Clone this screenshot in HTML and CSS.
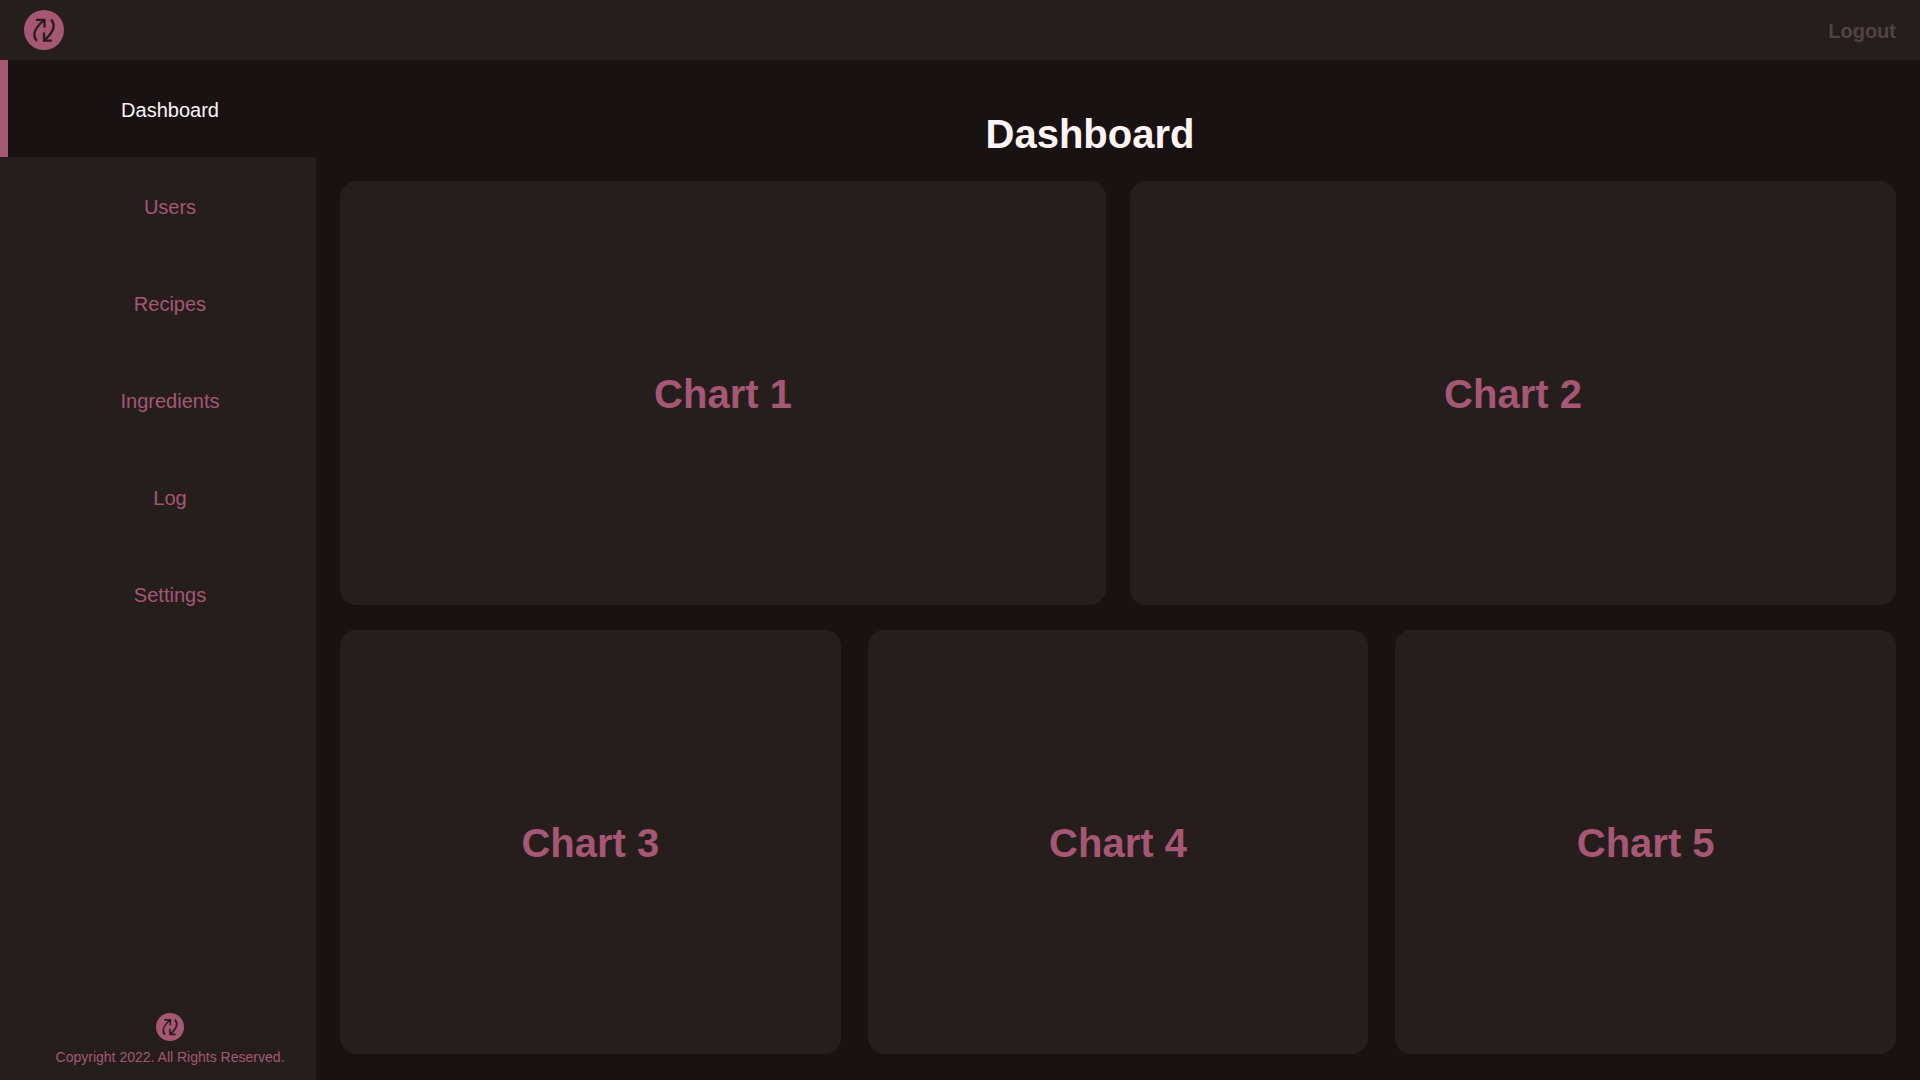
FILE: index.html
```html
<!DOCTYPE html>
<html lang="en">
<head>
  <meta charset="utf-8">
  <meta name="viewport" content="width=device-width, initial-scale=1">
  <title>Dashboard</title>
  <link rel="stylesheet" href="styles.css">
</head>
<body>
  <header class="topbar">
    <a href="#" class="logo-link" aria-label="Home">
      <svg class="logo" viewBox="0 0 40 40" aria-hidden="true">
        <circle class="logo-disc" cx="20" cy="20" r="20"/>
        <path class="logo-arrows" d="M12.800 31C8 25 10 19 20 10M12 9.800H20.500V17.500M27 9.500C32 15 30 22 20 30.500M20 22.500V30.600H28"/>
      </svg>
    </a>
    <button type="button" class="logout">Logout</button>
  </header>
  <div class="layout">
    <aside class="sidebar">
      <nav class="nav">
        <a href="#" class="nav-item active" aria-current="page">Dashboard</a>
        <a href="#" class="nav-item">Users</a>
        <a href="#" class="nav-item">Recipes</a>
        <a href="#" class="nav-item">Ingredients</a>
        <a href="#" class="nav-item">Log</a>
        <a href="#" class="nav-item">Settings</a>
      </nav>
      <footer class="sidebar-footer">
        <svg class="logo logo-small" viewBox="0 0 40 40" aria-hidden="true">
          <circle class="logo-disc" cx="20" cy="20" r="20"/>
          <path class="logo-arrows" d="M12.800 31C8 25 10 19 20 10M12 9.800H20.500V17.500M27 9.500C32 15 30 22 20 30.500M20 22.500V30.600H28"/>
        </svg>
        <p class="copyright">Copyright 2022. All Rights Reserved.</p>
      </footer>
    </aside>
    <main class="main">
      <h1 class="title">Dashboard</h1>
      <div class="charts">
        <div class="row">
          <section class="card"><h2 class="card-title">Chart 1</h2></section>
          <section class="card"><h2 class="card-title">Chart 2</h2></section>
        </div>
        <div class="row row-three">
          <section class="card"><h2 class="card-title">Chart 3</h2></section>
          <section class="card"><h2 class="card-title">Chart 4</h2></section>
          <section class="card"><h2 class="card-title">Chart 5</h2></section>
        </div>
      </div>
    </main>
  </div>
</body>
</html>
```
FILE: styles.css
```css
:root {
  --bg: #181212;
  --panel: #261e1d;
  --accent: #a55774;
  --text: #fef4f4;
  --muted: #514344;
}

* {
  box-sizing: border-box;
}

body {
  margin: 0;
  min-height: 100vh;
  display: flex;
  flex-direction: column;
  background: var(--bg);
  color: var(--text);
  font-family: "Liberation Sans", Helvetica, Arial, sans-serif;
}

.topbar {
  display: flex;
  align-items: center;
  justify-content: space-between;
  height: 60px;
  padding: 0 24px;
  background: var(--panel);
}

.logo-link {
  display: block;
}

.logo {
  display: block;
  width: 40px;
  height: 40px;
}

.logo-small {
  width: 28px;
  height: 28px;
}

.logo-disc {
  fill: var(--accent);
}

.logo-arrows {
  fill: none;
  stroke: var(--panel);
  stroke-width: 2.3;
}

.logout {
  padding: 2px 0 0;
  border: 0;
  background: none;
  color: var(--muted);
  font: bold 20px/24px "Liberation Sans", Helvetica, Arial, sans-serif;
}

.layout {
  flex: 1;
  display: flex;
}

.sidebar {
  flex: none;
  width: 316px;
  display: flex;
  flex-direction: column;
  justify-content: space-between;
  background: var(--panel);
}

.nav-item {
  display: block;
  padding: 38px 0 35px 16px;
  border-left: 8px solid transparent;
  color: var(--accent);
  font-size: 20px;
  line-height: 24px;
  text-align: center;
  text-decoration: none;
}

.nav-item.active {
  border-color: var(--accent);
  background: var(--bg);
  color: var(--text);
}

.sidebar-footer {
  display: flex;
  flex-direction: column;
  align-items: center;
  gap: 8px;
  padding: 0 0 15px 24px;
}

.copyright {
  margin: 0;
  color: var(--accent);
  font-size: 14px;
  line-height: 16px;
}

.main {
  flex: 1;
  display: flex;
  flex-direction: column;
  padding: 50px 24px 26px;
}

.title {
  margin: 0 0 23px;
  padding-right: 56px;
  font-size: 40px;
  line-height: 48px;
  text-align: center;
}

.charts {
  flex: 1;
  display: grid;
  grid-template-rows: 1fr 1fr;
  gap: 25px;
}

.row {
  display: flex;
  gap: 24px;
}

.row-three {
  gap: 27px;
}

.card {
  flex: 1;
  display: flex;
  align-items: center;
  justify-content: center;
  padding-top: 2px;
  border-radius: 16px;
  background: var(--panel);
}

.card-title {
  margin: 0;
  color: var(--accent);
  font-size: 40px;
  line-height: 48px;
}
```
